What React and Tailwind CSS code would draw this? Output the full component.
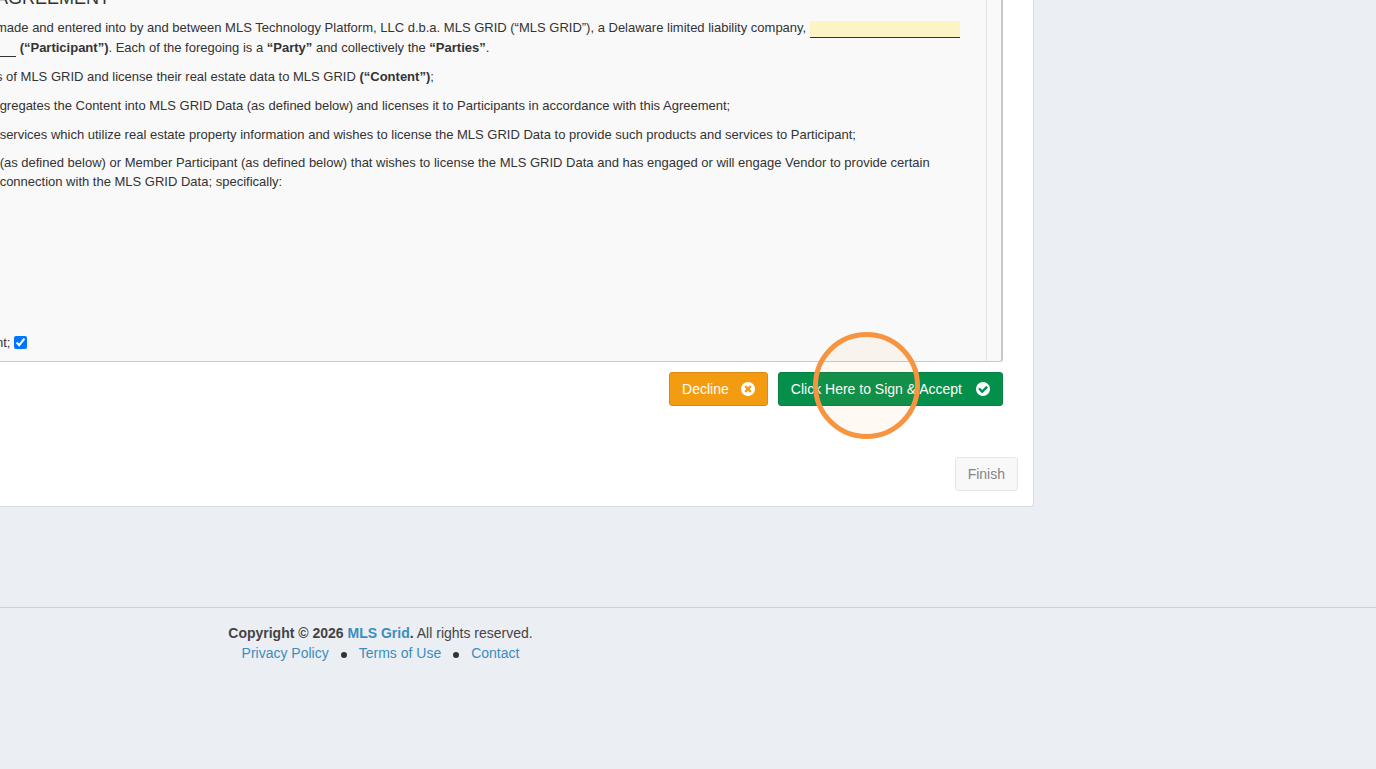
import { useState } from "react";

const TimesCircle = () => (
  <svg viewBox="128 128 1536 1536" className="h-3.5 w-3.5" fill="currentColor" aria-hidden="true">
    <path d="M1277 1122q0-26-19-45l-181-181 181-181q19-19 19-45 0-27-19-46l-90-90q-19-19-46-19-26 0-45 19l-181 181-181-181q-19-19-45-19-27 0-46 19l-90 90q-19 19-19 46 0 26 19 45l181 181-181 181q-19 19-19 45 0 27 19 46l90 90q19 19 46 19 26 0 45-19l181-181 181 181q19 19 45 19 27 0 46-19l90-90q19-19 19-46zm387-226q0 209-103 385.5t-279.5 279.5-385.5 103-385.5-103-279.5-279.5-103-385.5 103-385.5 279.5-279.5 385.5-103 385.5 103 279.5 279.5 103 385.5z" />
  </svg>
);

const CheckCircle = () => (
  <svg viewBox="128 128 1536 1536" className="h-3.5 w-3.5" fill="currentColor" aria-hidden="true">
    <path d="M1412 734q0-28-18-46l-91-90q-19-19-45-19t-45 19l-408 407-226-226q-19-19-45-19t-45 19l-91 90q-18 18-18 46 0 27 18 45l362 362q19 19 45 19 27 0 46-19l543-543q18-18 18-45zm252 162q0 209-103 385.5t-279.5 279.5-385.5 103-385.5-103-279.5-279.5-103-385.5 103-385.5 279.5-279.5 385.5-103 385.5 103 279.5 279.5 103 385.5z" />
  </svg>
);

const Agreement = () => {
  const [checked, setChecked] = useState(true);

  return (
    <div className="overflow-hidden rounded-br-[3px] border-r-2 border-b border-[#c8c8c8] bg-[#f9f9f9] pr-3.5">
      <div className="overflow-hidden border-r border-[#e3e3e3] pb-[9px] text-[13px] leading-[19px] text-[#333]">
        <div className="-mt-3 -ml-1 whitespace-pre">
          <h1 className="mb-2.5 text-lg leading-5">AGREEMENT</h1>
          <p className="mb-[9px] leading-5">
            made and entered into by and between MLS Technology Platform, LLC d.b.a. MLS GRID (“MLS
            GRID”), a Delaware limited liability company,{" "}
            <span className="mt-[3px] inline-block h-[17px] w-[150px] border-b border-[#333] bg-[#fcf4c5] align-top" />
            <br />
            <span className="inline-block h-[19px] w-5 border-b border-[#333] align-top" />{" "}
            <strong>(“Participant”)</strong>. Each of the foregoing is a <strong>“Party”</strong>{" "}
            and collectively the <strong>“Parties”</strong>.
          </p>
          <p className="mb-2.5">
            s of MLS GRID and license their real estate data to MLS GRID{" "}
            <strong>(“Content”)</strong>;
          </p>
          <p className="mb-2.5">
            {" "}gregates the Content into MLS GRID Data (as defined below) and licenses it to
            Participants in accordance with this Agreement;
          </p>
          <p className="mb-[9px]">
            {" "}services which utilize real estate property information and wishes to license the
            MLS GRID Data to provide such products and services to Participant;
          </p>
          <p>
            {" "}(as defined below) or Member Participant (as defined below) that wishes to license
            the MLS GRID Data and has engaged or will engage Vendor to provide certain
            <br />
            {" "}connection with the MLS GRID Data; specifically:
          </p>
          <label className="mt-[142px] flex items-center gap-1">
            <span>nt;</span>
            <input
              type="checkbox"
              checked={checked}
              onChange={() => setChecked(!checked)}
              className="h-[13px] w-[13px]"
            />
          </label>
        </div>
      </div>
    </div>
  );
};

const App = () => {
  return (
    <div className="min-h-screen bg-[#ebeff4] font-['Liberation_Sans',Arial,sans-serif] text-sm leading-5 text-[#333]">
      <div className="pr-[342px]">
        <main className="rounded-br-[3px] border-r border-b border-[#d5dae0] bg-white pb-[15px]">
          <div className="pr-[30px]">
            <Agreement />
            {/* Sign buttons */}
            <div className="mt-2.5 flex justify-end gap-2.5">
              <button
                type="button"
                className="flex items-center gap-3 rounded-[3px] border border-[#d98c15] bg-[#f39c12] px-3 py-1.5 text-white"
              >
                Decline <TimesCircle />
              </button>
              <div className="relative">
                <button
                  type="button"
                  className="flex items-center gap-3.5 rounded-[3px] border border-[#0a7f42] bg-[#048f4a] px-3 py-1.5 text-white"
                >
                  Click Here to Sign &amp; Accept <CheckCircle />
                </button>
                {/* Click highlight */}
                <span className="pointer-events-none absolute -top-10 left-[35px] h-[107px] w-[107px] rounded-full border-5 border-[#f79441] bg-[#f79441]/6" />
              </div>
            </div>
          </div>
          <div className="mt-[51px] flex justify-end pr-[15px]">
            <button
              type="button"
              disabled
              className="rounded-[3px] border border-[#e6e6e6] bg-[#f8f8f8] px-3 py-1.5 text-[#858585]"
            >
              Finish
            </button>
          </div>
        </main>
      </div>

      <footer className="mt-[100px] border-t border-[#ccd2da] py-[15px] text-[#444]">
        <div className="flex max-w-[761px] flex-col items-center">
          <p>
            <strong>
              Copyright © 2026{" "}
              <a href="#" className="text-[#3c8dbc]">
                MLS Grid
              </a>
              .
            </strong>{" "}
            All rights reserved.
          </p>
          <nav className="flex items-center gap-3 text-[#3c8dbc]">
            <a href="#privacy">Privacy Policy</a>
            <span className="mt-1 h-1.5 w-1.5 rounded-full bg-[#333]" />
            <a href="#terms">Terms of Use</a>
            <span className="mt-1 h-1.5 w-1.5 rounded-full bg-[#333]" />
            <a href="#contact">Contact</a>
          </nav>
        </div>
      </footer>
    </div>
  );
};

export default App;
